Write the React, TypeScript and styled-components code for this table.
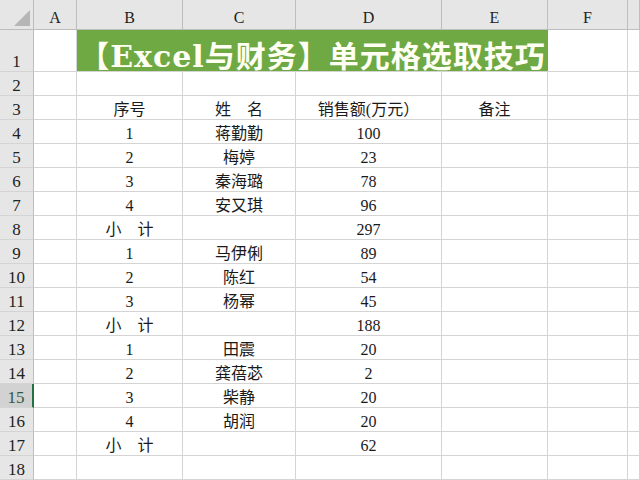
import React from "react";
import styled, { createGlobalStyle } from "styled-components";

const Global = createGlobalStyle`
  html, body { margin: 0; padding: 0; background: #fff; overflow: hidden; }
  body { font-family: "Liberation Serif", "Noto Sans CJK SC", serif; }
`;

const GRID = "#d4d4d4";
const HEAD_LINE = "#bdbdbd";

const Sheet = styled.div`
  display: grid;
  grid-template-columns: 34px 43px 106px 113px 146px 106px 80px 1fr;
  grid-template-rows: 30px 42px repeat(17, 24px);
  width: 640px;
  height: 480px;
  overflow: hidden;
`;

const Corner = styled.div`
  box-sizing: border-box;
  background: #e6e6e6;
  border-right: 1px solid ${HEAD_LINE};
  border-bottom: 1px solid ${HEAD_LINE};
  display: flex;
  justify-content: flex-end;
  align-items: flex-end;
  padding: 0 3px 3px 0;
`;

const Triangle = styled.div`
  width: 0;
  height: 0;
  border-left: 16px solid transparent;
  border-bottom: 16px solid #b6b6b6;
`;

const ColHeader = styled.div`
  box-sizing: border-box;
  background: #e6e6e6;
  border-right: 1px solid ${HEAD_LINE};
  border-bottom: 1px solid ${HEAD_LINE};
  display: flex;
  align-items: flex-end;
  justify-content: center;
  padding-bottom: 2px;
  font-family: "Liberation Serif", serif;
  font-size: 16px;
  line-height: 18px;
  color: #222;
`;

const RowHeader = styled.div<{ $active?: boolean }>`
  box-sizing: border-box;
  background: ${(p) => (p.$active ? "#d2d2d2" : "#e6e6e6")};
  border-right: ${(p) => (p.$active ? "2px solid #217346" : `1px solid ${HEAD_LINE}`)};
  border-bottom: 1px solid ${GRID};
  display: flex;
  align-items: flex-end;
  justify-content: center;
  padding-bottom: 0;
  font-family: "Liberation Serif", serif;
  font-size: 17px;
  line-height: 19px;
  color: ${(p) => (p.$active ? "#2d5a3f" : "#222")};
`;

const Cell = styled.div`
  box-sizing: border-box;
  border-right: 1px solid ${GRID};
  border-bottom: 1px solid ${GRID};
  display: flex;
  align-items: flex-end;
  justify-content: center;
  padding-bottom: 0;
  font-family: "Liberation Serif", "Noto Sans CJK SC", serif;
  font-size: 16px;
  line-height: 18px;
  color: #1a1a1a;
  white-space: nowrap;
`;

const TitleCell = styled.div`
  grid-column: span 4;
  box-sizing: border-box;
  background: #6fa943;
  border-bottom: 1px solid ${GRID};
  display: flex;
  align-items: center;
  justify-content: center;
  padding-top: 6px;
  font-family: "DejaVu Serif", "Noto Sans CJK SC", serif;
  font-weight: bold;
  font-size: 30px;
  letter-spacing: 1px;
  color: #fffff4;
  white-space: nowrap;
`;

type Row = [string, string, string, string];

const rows: Row[] = [
  ["", "", "", ""],
  ["序号", "姓\u3000名", "销售额(万元）", "备注"],
  ["1", "蒋勤勤", "100", ""],
  ["2", "梅婷", "23", ""],
  ["3", "秦海璐", "78", ""],
  ["4", "安又琪", "96", ""],
  ["小\u3000计", "", "297", ""],
  ["1", "马伊俐", "89", ""],
  ["2", "陈红", "54", ""],
  ["3", "杨幂", "45", ""],
  ["小\u3000计", "", "188", ""],
  ["1", "田震", "20", ""],
  ["2", "龚蓓苾", "2", ""],
  ["3", "柴静", "20", ""],
  ["4", "胡润", "20", ""],
  ["小\u3000计", "", "62", ""],
  ["", "", "", ""],
];

const cols = ["A", "B", "C", "D", "E", "F", ""];

export default function App() {
  return (
    <>
      <Global />
      <Sheet>
        <Corner>
          <Triangle />
        </Corner>
        {cols.map((c, i) => (
          <ColHeader key={i}>{c}</ColHeader>
        ))}

        <RowHeader>1</RowHeader>
        <Cell />
        <TitleCell>【Excel与财务】单元格选取技巧</TitleCell>
        <Cell />
        <Cell />

        {rows.map((r, i) => {
          const n = i + 2;
          return (
            <React.Fragment key={n}>
              <RowHeader $active={n === 15}>{n}</RowHeader>
              <Cell />
              {r.map((v, j) => (
                <Cell key={j}>{v}</Cell>
              ))}
              <Cell />
              <Cell />
            </React.Fragment>
          );
        })}
      </Sheet>
    </>
  );
}
